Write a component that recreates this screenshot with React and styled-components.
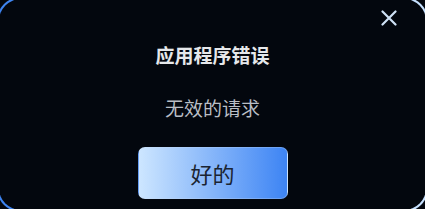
import React from 'react';
import styled, { createGlobalStyle } from 'styled-components';

const Global = createGlobalStyle`
  html, body {
    margin: 0;
    padding: 0;
    background: #03070e;
    overflow: hidden;
  }
  body {
    font-family: "Noto Sans CJK SC", "Noto Sans", sans-serif;
  }
`;

const Dialog = styled.div`
  position: relative;
  box-sizing: border-box;
  width: calc(100vw + 6px);
  height: 215px;
  margin: -3px;
  border-radius: 24px;
  border: 2px solid transparent;
  background:
    linear-gradient(#03070e, #03070e) padding-box,
    linear-gradient(90deg, #3b82f0, #c9e3ff) border-box;
  display: flex;
  flex-direction: column;
  align-items: center;
  padding-top: 44px;
`;

const Close = styled.button`
  position: absolute;
  top: 9px;
  right: 27px;
  width: 20px;
  height: 20px;
  padding: 0;
  border: none;
  background: none;
  display: flex;
  align-items: center;
  justify-content: center;
  cursor: pointer;
`;

const Title = styled.h2`
  margin: 0;
  font-size: 19px;
  line-height: 24px;
  font-weight: 700;
  color: #e6e8eb;
`;

const Message = styled.p`
  margin: 29px 0 0;
  font-size: 19px;
  line-height: 24px;
  font-weight: 400;
  color: #b9bec5;
`;

const OkButton = styled.button`
  margin-top: 27px;
  width: 150px;
  height: 52px;
  border-radius: 7px;
  border: 1px solid rgba(200, 220, 245, 0.3);
  background: linear-gradient(90deg, #cde6ff, #3d84f4);
  color: #1a2432;
  font-family: "Noto Sans CJK SC", sans-serif;
  font-size: 22px;
  cursor: pointer;
`;

export default function App() {
  return (
    <>
      <Global />
      <Dialog>
        <Close aria-label="close">
          <svg width="16" height="16" viewBox="0 0 16 16">
            <path d="M1.5 1.5 L14.5 14.5 M14.5 1.5 L1.5 14.5" stroke="#cfe2f6" strokeWidth="2.2" strokeLinecap="round" />
          </svg>
        </Close>
        <Title>应用程序错误</Title>
        <Message>无效的请求</Message>
        <OkButton>好的</OkButton>
      </Dialog>
    </>
  );
}
